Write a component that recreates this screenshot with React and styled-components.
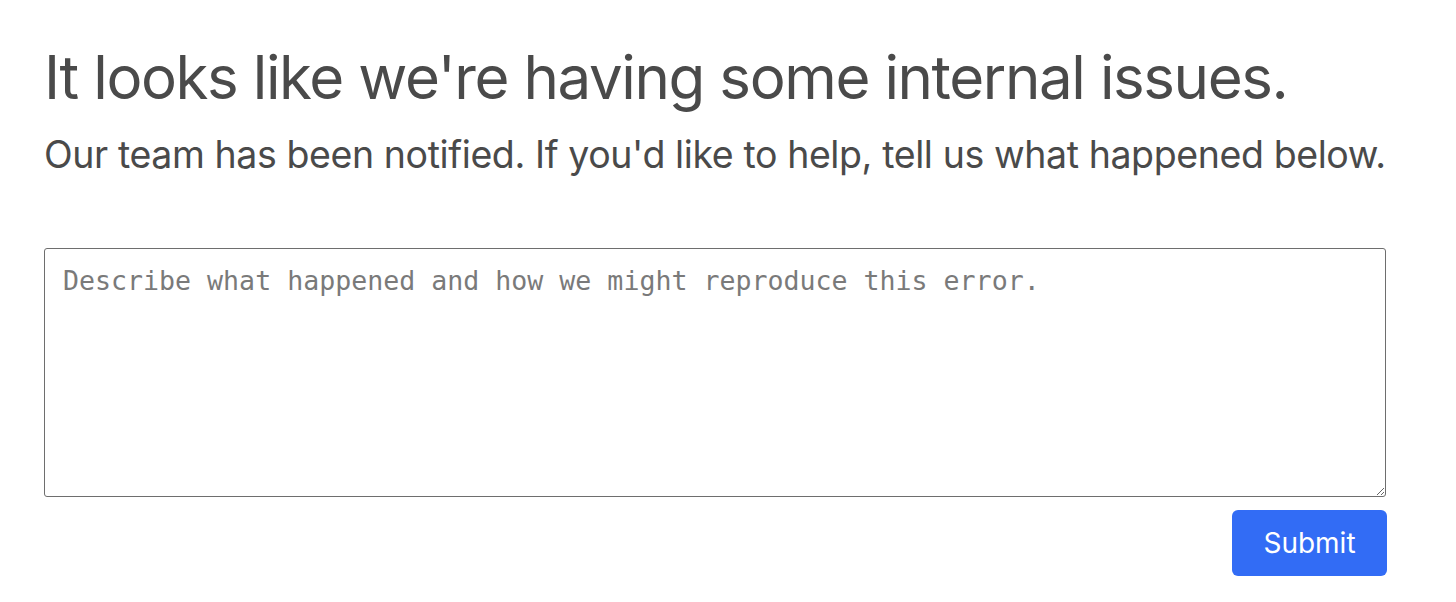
import React, { useState } from 'react';
import styled, { createGlobalStyle } from 'styled-components';

const GlobalStyle = createGlobalStyle`
  body {
    margin: 0;
    background: #ffffff;
    font-family: Inter, "Noto Sans", sans-serif;
    color: #4a4a4a;
  }
`;

const Page = styled.div`
  width: 1342px;
  padding: 37px 0 0 44px;
`;

const Title = styled.h1`
  margin: 0;
  font-size: 60px;
  font-weight: 400;
  line-height: 80px;
  letter-spacing: -1.4px;
`;

const Subtitle = styled.p`
  margin: 13px 0 0;
  font-size: 37.5px;
  line-height: 50px;
  letter-spacing: -0.4px;
`;

const Form = styled.form`
  display: flex;
  flex-direction: column;
  align-items: flex-end;
  gap: 13px;
  margin-top: 68px;
`;

const TextArea = styled.textarea`
  box-sizing: border-box;
  width: 100%;
  height: 249px;
  padding: 16px 18px;
  border: 1px solid #6e6e6e;
  border-radius: 3px;
  font-family: "DejaVu Sans Mono", monospace;
  font-size: 26.6px;
  color: #333;
  resize: vertical;
  outline: none;

  &::placeholder {
    color: #7a7a7a;
  }
`;

const Button = styled.button`
  width: 155px;
  height: 66px;
  margin-right: -1px;
  border: none;
  border-radius: 6px;
  background: #326cf5;
  color: #ffffff;
  font-family: Inter, "Noto Sans", sans-serif;
  font-size: 28px;
  cursor: pointer;
`;

const App = () => {
  const [text, setText] = useState('');

  return (
    <Page>
      <GlobalStyle />
      <Title>It looks like we're having some internal issues.</Title>
      <Subtitle>Our team has been notified. If you'd like to help, tell us what happened below.</Subtitle>
      <Form onSubmit={(e) => e.preventDefault()}>
        <TextArea
          placeholder="Describe what happened and how we might reproduce this error."
          value={text}
          onChange={(e) => setText(e.target.value)}
        />
        <Button type="submit">Submit</Button>
      </Form>
    </Page>
  );
};

export default App;
